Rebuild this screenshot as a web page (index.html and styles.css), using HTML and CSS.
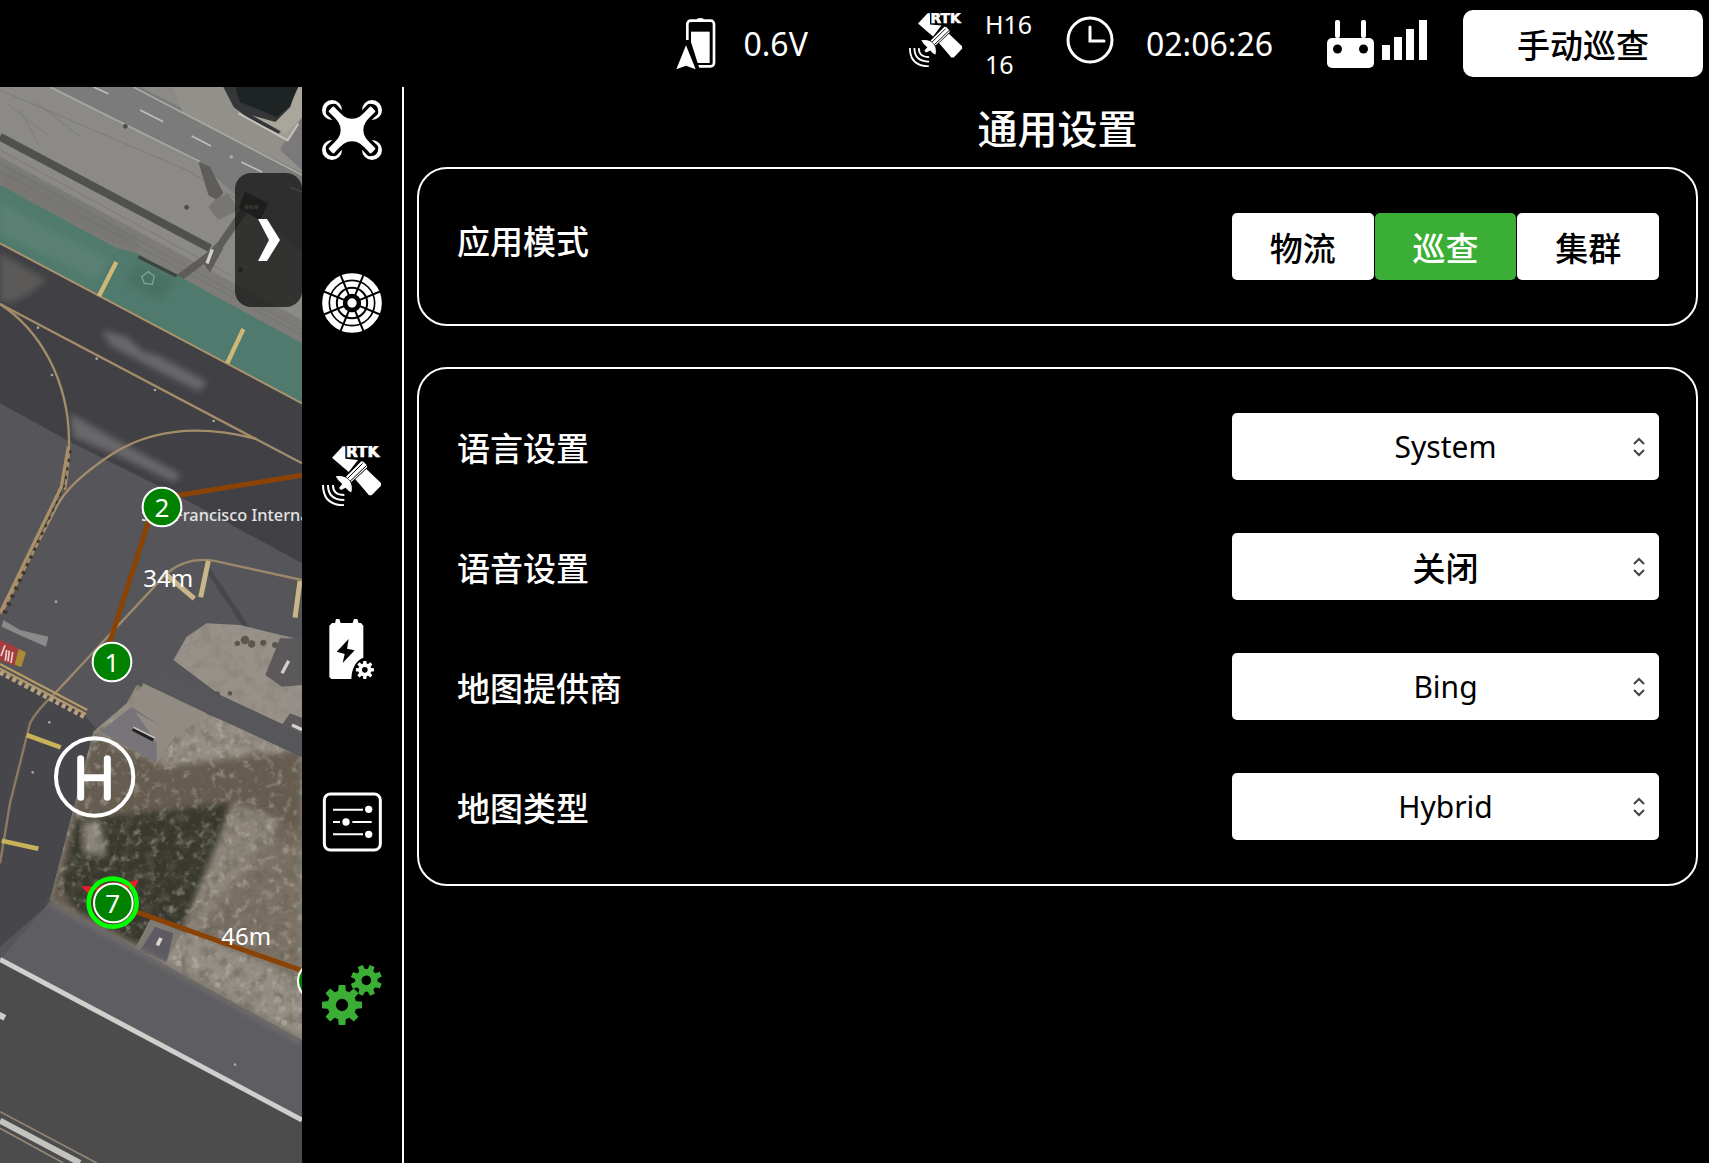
FILE: index.html
```html
<!DOCTYPE html>
<html lang="zh-CN">
<head>
<meta charset="utf-8">
<meta name="viewport" content="width=device-width, initial-scale=1">
<title>通用设置</title>
<link rel="stylesheet" href="styles.css">
</head>
<body>
<svg class="defs" aria-hidden="true">
  <defs>
    <symbol id="icon-rtk" viewBox="0 0 180 180">
      <path fill="#fff" d="M30 35 62 1h8v37l38 4-28 36z"/>
      <text x="72" y="34" class="rtk-text">RTK</text>
      <path fill="#fff" d="M100 100 133 69l44 42v8l-28 29h-8zM72 92l46-46 6 1 11 11v6L88 108z"/>
      <path d="M76 98l46-46M84 106l50-48" stroke="#000" stroke-width="3"/>
      <path fill="#fff" d="M41 91q28-4 42 14 10 14 5 34-9-3-17-14l-14 7-6-6 10-12q-14-10-20-23z"/>
      <path d="M33 117q-1 30 34 30M18 117q0 45 49 45M3 117q0 60 63 61" fill="none" stroke="#fff" stroke-width="6"/>
    </symbol>
    <symbol id="gear" viewBox="-60 -60 120 120">
      <circle r="31" fill="none" stroke="currentColor" stroke-width="25"/>
      <g fill="currentColor">
        <path id="teeth" d="M-12-38-10-60h20l2 22zM-12 38l2 22h20l2-22zM-38-12-60-10v20l22 2zM38-12l22 2v20l-22 2z"/>
        <use href="#teeth" transform="rotate(45)"/>
      </g>
    </symbol>
  </defs>
</svg>

<header class="topbar">
  <div class="status status-battery">
    <svg class="icon-battery" viewBox="0 0 120 156" aria-label="电池">
      <path fill="#fff" d="M62 6q0-6 11-6t11 6z"/>
      <rect x="34" y="8" width="80" height="137" rx="10" fill="none" stroke="#fff" stroke-width="8"/>
      <path fill="#fff" d="M45 41h56v94H45z"/>
      <path fill="#000" d="M27 66h16l28 88H0z"/>
      <path fill="#fff" d="M30 82l29 72-29-11-29 11z"/>
    </svg>
    <span class="value">0.6V</span>
  </div>
  <div class="status status-rtk">
    <svg class="icon-small" aria-label="RTK"><use href="#icon-rtk"/></svg>
    <div class="sats"><span>H16</span><span>16</span></div>
  </div>
  <div class="status status-time">
    <svg class="icon-clock" viewBox="0 0 48 48" aria-label="时间">
      <circle cx="24" cy="24" r="22" fill="none" stroke="#fff" stroke-width="3"/>
      <path d="M24 11v14h14" fill="none" stroke="#fff" stroke-width="3" stroke-linecap="round"/>
    </svg>
    <span class="value">02:06:26</span>
  </div>
  <svg class="icon-remote" viewBox="0 0 100 48" aria-label="遥控信号">
    <g fill="#fff">
      <rect x="8" y="0" width="5" height="18" rx="2"/><rect x="34" y="0" width="5" height="18" rx="2"/>
      <rect y="18" width="47" height="30" rx="5"/>
      <path d="M55 25h8v15h-8zM67 17h8v23h-8zM79 9h8v31h-8zM92 0h8v40h-8z"/>
    </g>
    <circle cx="10.500" cy="29" r="4.500"/><circle cx="36.500" cy="29" r="4.500"/>
  </svg>
  <button class="mode-button" type="button">手动巡查</button>
</header>

<div class="workspace">
  <section class="map" aria-label="地图">
    <svg class="map-canvas" viewBox="0 21 906 3228" preserveAspectRatio="xMinYMin slice">
      <defs>
        <filter id="grain" x="0" y="0" width="100%" height="100%">
          <feTurbulence type="fractalNoise" baseFrequency="0.030" numOctaves="5" seed="4"/>
          <feColorMatrix values="0 0 0 0 .13  0 0 0 0 .12  0 0 0 0 .09  3 0 0 0 -1.35"/>
        </filter>
        <filter id="grain-light" x="0" y="0" width="100%" height="100%">
          <feTurbulence type="fractalNoise" baseFrequency="0.040" numOctaves="5" seed="11"/>
          <feColorMatrix values="0 0 0 0 .68  0 0 0 0 .64  0 0 0 0 .56  0 3 0 0 -1.6"/>
        </filter>
        <filter id="soft"><feGaussianBlur stdDeviation="9"/></filter>
        <clipPath id="field"><path d="M280 1955 380 1870 410 1815 906 2020V2880L560 2690 400 2600 150 2460z"/></clipPath>
        <clipPath id="island"><path d="M520 1740 560 1670 620 1630 720 1635 906 1680V1990L760 1920z"/></clipPath>
      </defs>
      <path fill="#56555a" d="M0 0h906v3260H0z"/>
      <!-- apron -->
      <path fill="#8b8a87" d="M0 0h906v800L0 320z"/>
      <path fill="#7c7b7b" d="M120 0h260l526 270v250L600 250z"/>
      <path fill="#92908a" d="M510 0h400v280L550 100z"/>
      <path fill="#74736f" opacity=".6" d="M0 230 906 720v80L0 330z"/>
      <path fill="#777671" filter="url(#soft)" d="M0 240 420 480l-20 40L0 320z" opacity=".8"/>
      <g stroke="#6c6b68" stroke-width="3" opacity=".5" fill="none">
        <path d="M0 30 560 270l346 200M0 250l906 500M0 275l906 490M0 210l700 380M20 70l130 100M100 60l140 110M60 90l60 110"/>
      </g>
      <path d="M150 21 600 245M400 21 906 285" stroke="#aaa8a2" stroke-width="5"/>
      <path d="M420 90l70 35M575 168l58 30M724 246l62 30M870 322l36 14M280 21l45 20" stroke="#c0beb8" stroke-width="5"/>
      <path fill="#7b797c" d="M840 210 906 90v180z"/>
      <path fill="#a09d92" d="M690 21h216v90l-45 72-145-82z"/>
      <path fill="#343638" d="M670 21h236l-30 90-40 50-90-45-45-35z"/>
      <path fill="#aaa69b" d="M906 21v90l-50 50-100-55 70 20 45-45 20-60z"/>
      <path fill="#1d2423" d="M705 21h190l-28 60-37 30-110-45z"/>
      <path d="M716 100l147 81 32-50" stroke="#c4c2bb" stroke-width="6" fill="none"/>
      <path d="M0 170 630 505" stroke="#50504d" stroke-width="24"/>
      <path d="M535 595 650 510l90-130" stroke="#5d5c58" stroke-width="22" fill="none"/>
      <path fill="#5e5d59" d="M595 245l35 15 40 80-20 20-25-15zM600 540l50-50 20 15-40 72z"/>
      <path fill="#777674" d="M650 355 685 340l30 50-60 30-30-40z"/>
      <path fill="#3f3e3b" d="M735 335 805 370 780 420 715 385z"/>
      <path d="M637 508 621 550" stroke="#d2d1ca" stroke-width="10"/>
      <g fill="#4d4c4a"><circle cx="376" cy="139" r="7"/><circle cx="560" cy="382" r="7"/><circle cx="722" cy="569" r="7"/></g>
      <g fill="#8d8c89"><circle cx="740" cy="381" r="7"/><circle cx="754" cy="381" r="7"/><circle cx="769" cy="381" r="7"/></g>
      <!-- green verge -->
      <path fill="#507a6d" d="M0 315 350 505l60 15 496 270v180L0 490z"/>
      <path fill="#638478" opacity=".6" filter="url(#soft)" d="M0 370 330 540l-40 60L0 460z"/>
      <path fill="#44675c" opacity=".5" filter="url(#soft)" d="M410 550 530 600 480 660 380 610z"/>
      <path d="M415 530l115 58" stroke="#3b4644" stroke-width="10"/>
      <path d="M425 590l20-15 18 14-6 24-24-3z" fill="none" stroke="#81a398" stroke-width="4"/>
      <!-- taxiway -->
      <path fill="#414045" d="M0 490 906 970v480L540 1250 200 1080 0 970z"/>
      <path fill="#65635f" filter="url(#soft)" d="M0 520 140 600 90 640 30 670 0 660z" opacity=".75"/>
      <path fill="#69686a" filter="url(#soft)" d="M305 750 380 770 430 815 470 825 620 905 600 935 440 855 330 795z"/>
      <path fill="#69686a" filter="url(#soft)" d="M210 1000 350 1080 545 1185 520 1205 360 1130 220 1070z"/>
      <path d="M0 490 906 970" stroke="#aa926b" stroke-width="6"/>
      <path d="M297 648 349 546M682 849 730 747" stroke="#cfb877" stroke-width="13"/>
      <g fill="none" stroke="#a38d6a" stroke-width="7">
        <path d="M0 672 906 1150"/>
        <path d="M0 672C120 750 205 900 207 1080Q208 1150 195 1230"/>
        <path d="M770 1077C550 1020 420 1070 340 1120 240 1185 190 1240 170 1280L10 1590"/>
      </g>
      <path d="M208 1110 190 1210 8 1610" fill="none" stroke="#40372c" stroke-width="16" stroke-dasharray="10 16"/>
      <path d="M205 1100 184 1220 0 1600" fill="none" stroke="#a8906a" stroke-width="10"/>
      <path d="M906 1500 640 1442Q560 1430 500 1480L165 1840Q110 1890 90 1930L30 2170 0 2350" fill="none" stroke="#9c886b" stroke-width="7"/>
      <path d="M625 1470 745 1650" stroke="#48474b" stroke-width="15"/>
      <path d="M625 1443 602 1552M500 1485 583 1556M900 1503 885 1613" stroke="#c8b58a" stroke-width="15"/>
      <path fill="#8b8a8a" d="M10 1620 60 1650 145 1670 138 1700 70 1670 5 1640z"/>
      <!-- runway hold sign -->
      <path fill="#a53c3d" d="M0 1680 56 1705 45 1757 0 1742z"/><path fill="#ac8c32" d="M56 1707l22 10-14 44-20-7z"/>
      <path d="M3 1728l12-32M20 1710l-4 32M28 1712l-4 32M38 1716l-5 33" stroke="#ecd4d2" stroke-width="5"/>
      <path fill="#424145" opacity=".7" d="M0 1780 250 1900 300 1960 240 2250 150 2470 0 2600z"/>
      <path d="M165 1840Q110 1890 90 1930L30 2170 0 2350" fill="none" stroke="#8a7a64" stroke-width="7"/>
      <path d="M0 1752 262 1890M0 1766 258 1902" stroke="#b79b66" stroke-width="6"/>
      <path d="M0 1777 252 1910" stroke="#b7a382" stroke-width="14" stroke-dasharray="12 9"/>
      <!-- dirt field and island -->
      <path fill="#98918a" d="M520 1740 560 1670 620 1630 720 1635 906 1680V1990L760 1920z"/>
      <path fill="#958e84" d="M280 1955 380 1870 410 1815 906 2020V2880L560 2690 400 2600 150 2460z"/>
      <g clip-path="url(#field)">
        <path fill="#665c50" filter="url(#soft)" d="M500 2060 906 2010V2300L700 2220 560 2560 420 2600 140 2500 280 1960z"/>
        <path fill="#38382f" filter="url(#soft)" d="M230 2220 690 2170 650 2340 560 2530 420 2600 240 2500 180 2430z"/>
        <path fill="#8d857a" filter="url(#soft)" d="M700 2170 850 2220 690 2450 590 2560 550 2540z"/>
        <path fill="#756a5d" opacity=".8" filter="url(#soft)" d="M850 2230 906 2250V2700L580 2560z"/>
        <path fill="#8b857c" filter="url(#soft)" d="M245 2230 300 2220 320 2330 250 2320z"/>
        <path d="M150 1800h760v1100H150z" filter="url(#grain)" opacity=".5"/>
        <path d="M150 1800h760v1100H150z" filter="url(#grain-light)" opacity=".4"/>
      </g>
      <g clip-path="url(#island)"><path d="M500 1600h406v400H500z" filter="url(#grain)" opacity=".2"/></g>
      <g fill="#45443a" opacity=".75"><circle cx="735" cy="1680" r="13"/><circle cx="755" cy="1692" r="11"/><circle cx="790" cy="1688" r="9"/><circle cx="825" cy="1695" r="9"/><circle cx="712" cy="1690" r="8"/><circle cx="652" cy="1842" r="8"/><circle cx="690" cy="1840" r="7"/></g>
      <path fill="#57565a" d="M480 1760 906 1960V2032L430 1810z"/>
      <path fill="#5b595a" d="M840 1675h66v140l-60 5-50-35zM870 1900l36 14v45l-60-25z"/>
      <path d="M846 1780l20-38M876 1935l30 14" stroke="#d3d0ca" stroke-width="10"/>
      <path fill="#918b84" d="M430 1810 620 1900 530 1970 395 1880z"/>
      <path fill="#77757a" d="M300 1955 395 1880 530 1970 470 2050z"/>
      <path fill="#918b84" d="M405 1895 530 1965 470 2050 470 1990z"/>
      <path d="M398 1948 460 1980" stroke="#222123" stroke-width="10"/>
      <path d="M400 1942 465 1974" stroke="#c6c2bb" stroke-width="5"/>
      <path d="M80 1965 182 2002M5 2282 115 2306" stroke="#c9b25a" stroke-width="14"/>
      <path fill="#807a74" d="M455 2510 545 2555 495 2650 405 2605z"/><path fill="#5d5b61" d="M465 2540 520 2560 500 2645 420 2612z"/>
      <path d="M472 2596 483 2574" stroke="#d9d8d5" stroke-width="11"/>
      <g fill="#aaa49c"><circle cx="535" cy="2650" r="9"/><circle cx="653" cy="2715" r="8"/><circle cx="852" cy="2828" r="9"/></g>
      <!-- runway -->
      <path fill="#5d5d62" d="M150 2465 400 2605 560 2690 906 2885V3120L0 2640z"/>
      <path d="M150 2465 400 2603 560 2690 906 2885" fill="none" stroke="#77736d" stroke-width="16" filter="url(#soft)"/>
      <path fill="#4c4c4d" d="M0 2640 906 3120V3260H0z"/>
      <path d="M0 2638 906 3120" stroke="#d0cfcb" stroke-width="15"/>
      <path d="M0 2816 8 2800" stroke="#d0cfcb" stroke-width="24"/>
      <path d="M0 3122 240 3249" stroke="#c2c2bf" stroke-width="18"/>
      <path d="M0 3095 290 3249M0 3145 190 3249" stroke="#968774" stroke-width="5"/>
      <g fill="#a7a5a2"><circle cx="114" cy="743" r="4"/><circle cx="290" cy="836" r="4"/><circle cx="465" cy="930" r="4"/><circle cx="641" cy="1023" r="4"/><circle cx="156" cy="885" r="4"/><circle cx="168" cy="1565" r="4"/><circle cx="148" cy="1927" r="4"/><circle cx="98" cy="2077" r="4"/><circle cx="705" cy="2954" r="4"/><circle cx="694" cy="230" r="6"/></g>
      <!-- place name, route and waypoints -->
      <text x="424" y="1323" class="place">San Francisco International</text>
      <path d="M906 1186 486 1254M450 1310 325 1700M338 2470 906 2672" fill="none" stroke="#8b4205" stroke-width="15"/>
      <text x="430" y="1520" class="distance">34m</text>
      <text x="664" y="2594" class="distance">46m</text>
      <path fill="#e8202c" d="M244 2418 300 2420 416 2400 350 2536z"/>
      <circle cx="338" cy="2468" r="72" fill="#4c3a25" stroke="#0f0" stroke-width="14"/>
      <path fill="#f03626" d="M285 2430q50-40 105-8l-50 30z"/>
      <g fill="#008200" stroke="#fff" stroke-width="6">
        <circle cx="486" cy="1281" r="58"/><circle cx="336" cy="1746" r="58"/><circle cx="340" cy="2469" r="58"/><circle cx="952" cy="2703" r="58"/>
      </g>
      <g class="waypoint"><text x="486" y="1310">2</text><text x="336" y="1775">1</text><text x="338" y="2498">7</text></g>
      <circle cx="284" cy="2091" r="116" fill="none" stroke="#fff" stroke-width="12"/>
      <path d="M242 2036v116M322 2036v116M242 2093h80" stroke="#fff" stroke-width="21" stroke-linecap="round"/>
    </svg>
    <button class="drawer-toggle" type="button" aria-label="展开">
      <svg viewBox="0 0 24 42"><path fill="#fff" d="M1 0h9l13 21-13 21H1l11-21z"/></svg>
    </button>
  </section>

  <nav class="sidebar" aria-label="设置分类">
    <button type="button" aria-label="飞行器"><svg viewBox="0 0 180 180">
      <g fill="none" stroke="#fff" stroke-width="12"><circle cx="30" cy="30" r="24"/><circle cx="150" cy="30" r="24"/><circle cx="30" cy="150" r="24"/><circle cx="150" cy="150" r="24"/></g>
      <path fill="#fff" stroke="#000" stroke-width="26" stroke-linejoin="round" d="M36 24C60 52 70 58 90 58S120 52 144 24L156 36C128 60 122 70 122 90S128 120 156 144L144 156C120 128 110 122 90 122S60 128 36 156L24 144C52 120 58 110 58 90S52 60 24 36z"/>
      <path fill="#fff" stroke="#fff" stroke-width="8" stroke-linejoin="round" d="M34 24C60 52 70 60 90 60S120 52 146 24L156 34C128 60 120 70 120 90S128 120 156 146L146 156C120 128 110 120 90 120S60 128 34 156L24 146C52 120 60 110 60 90S52 60 24 34z"/>
    </svg></button>
    <button type="button" aria-label="雷达"><svg viewBox="-90 -90 180 180">
      <circle r="14" fill="#fff"/>
      <g fill="none" stroke="#fff"><circle r="35" stroke-width="15"/><circle r="57" stroke-width="17"/><circle r="80" stroke-width="19"/></g>
      <g stroke="#000" stroke-width="6"><path d="M-8-20-36-88M8-20 36-88M-20-8-88-36M-20 8-88 36M-8 20-36 88M8 20 36 88M20-8 88-36M20 8 88 36"/></g>
    </svg></button>
    <button type="button" aria-label="RTK"><svg><use href="#icon-rtk"/></svg></button>
    <button type="button" aria-label="电池设置"><svg viewBox="0 0 180 180">
      <path fill="#fff" d="M30 12h9l3-12h10l4 12h36l4-12h10l4 12h7l7 8v96q-34 14-36 64H28l-6-6V20z"/>
      <path d="M80 60 44 98l24 7-6 27 36-38-23-5z"/>
      <use href="#gear" x="101" y="125" width="55" height="55"/>
    </svg></button>
    <button type="button" aria-label="参数"><svg viewBox="0 0 180 180">
      <rect x="7" y="6" width="168" height="168" rx="18" fill="none" stroke="#fff" stroke-width="9"/>
      <path d="M33 53h90M33 90h21M91 90h58M33 127h90" stroke="#fff" stroke-width="6"/>
      <g fill="#fff"><circle cx="140" cy="52" r="11"/><circle cx="72" cy="90" r="11"/><circle cx="140" cy="127" r="11"/></g>
    </svg></button>
    <button type="button" class="active" aria-label="通用设置"><svg viewBox="0 0 180 180">
      <use href="#gear" x="0" y="60" width="120" height="120"/>
      <use href="#gear" x="86" y="-1" width="94" height="94" transform="rotate(22 133 46)"/>
    </svg></button>
  </nav>

  <main class="settings">
    <h1>通用设置</h1>
    <section class="panel">
      <div class="row row-mode">
        <span class="label">应用模式</span>
        <div class="segmented control" role="group" aria-label="应用模式">
          <button type="button">物流</button>
          <button type="button" class="selected" aria-pressed="true">巡查</button>
          <button type="button">集群</button>
        </div>
      </div>
    </section>
    <section class="panel">
      <div class="row">
        <label class="label" for="language">语言设置</label>
        <div class="control picker"><select id="language"><option>System</option></select><svg viewBox="0 0 14 20"><path d="M2 7l5-5 5 5M2 13l5 5 5-5"/></svg></div>
      </div>
      <div class="row">
        <label class="label" for="voice">语音设置</label>
        <div class="control picker"><select id="voice" class="han"><option>关闭</option></select><svg viewBox="0 0 14 20"><path d="M2 7l5-5 5 5M2 13l5 5 5-5"/></svg></div>
      </div>
      <div class="row">
        <label class="label" for="provider">地图提供商</label>
        <div class="control picker"><select id="provider"><option>Bing</option></select><svg viewBox="0 0 14 20"><path d="M2 7l5-5 5 5M2 13l5 5 5-5"/></svg></div>
      </div>
      <div class="row">
        <label class="label" for="maptype">地图类型</label>
        <div class="control picker"><select id="maptype"><option>Hybrid</option></select><svg viewBox="0 0 14 20"><path d="M2 7l5-5 5 5M2 13l5 5 5-5"/></svg></div>
      </div>
    </section>
  </main>
</div>
</body>
</html>
```
FILE: styles.css
```css
* {
  box-sizing: border-box;
}

body {
  margin: 0;
  min-height: 100vh;
  display: flex;
  flex-direction: column;
  background: #000;
  color: #fff;
  font-family: "Noto Sans", "Noto Sans CJK SC", sans-serif;
  font-size: 33px;
}

button,
select {
  font: inherit;
  border: 0;
  padding: 0;
  cursor: pointer;
}

svg {
  display: block;
}

.defs {
  position: absolute;
  width: 0;
  height: 0;
}

.rtk-text {
  font: bold 46px "DejaVu Sans", sans-serif;
  fill: #fff;
  stroke: #fff;
  stroke-width: 2px;
}

h1,
.label,
.mode-button,
.segmented button,
.picker .han {
  font-family: "Noto Sans CJK SC", sans-serif;
  font-weight: 500;
}

/* Top bar */
.topbar {
  height: 87px;
  display: flex;
  align-items: center;
  justify-content: flex-end;
  padding-right: 6px;
}

.status {
  display: flex;
  align-items: center;
}

.value {
  font-size: 32px;
  line-height: 40px;
}

.status-battery {
  gap: 27px;
  margin-right: 101px;
}

.icon-battery {
  width: 40px;
  height: 52px;
}

.status-rtk {
  gap: 22px;
  margin-right: 34px;
}

.icon-small {
  width: 54px;
  height: 54px;
  margin-bottom: 8px;
}

.sats {
  display: flex;
  flex-direction: column;
  font-size: 25px;
  line-height: 40px;
}

.status-time {
  gap: 32px;
  margin-right: 54px;
}

.icon-clock {
  width: 48px;
  height: 48px;
  margin-bottom: 8px;
}

.icon-remote {
  width: 100px;
  height: 48px;
  margin-right: 36px;
}

.mode-button {
  width: 240px;
  height: 67px;
  border-radius: 10px;
  background: #fff;
  color: #000;
}

/* Workspace */
.workspace {
  flex: 1;
  display: grid;
  grid-template-columns: 302px 102px 1fr;
}

.map {
  position: relative;
  overflow: hidden;
  background: #56555a;
}

.map-canvas {
  width: 100%;
  height: 100%;
}

.place {
  font-size: 49px;
  font-weight: 500;
  fill: #e4e4e4;
}

.distance {
  font-size: 72px;
  fill: #fff;
}

.waypoint {
  font-size: 78px;
  fill: #fff;
  text-anchor: middle;
}

.drawer-toggle {
  position: absolute;
  top: 86px;
  right: 0;
  width: 67px;
  height: 134px;
  border-radius: 16px;
  background: rgba(20, 20, 20, .75);
  display: grid;
  place-items: center;
}

.drawer-toggle svg {
  width: 24px;
  height: 42px;
}

.sidebar {
  display: flex;
  flex-direction: column;
  align-items: center;
  gap: 113px;
  padding-top: 13px;
  border-right: 2px solid #fff;
}

.sidebar button {
  background: none;
  color: #fff;
}

.sidebar .active {
  color: #3bae36;
}

.sidebar button > svg {
  width: 60px;
  height: 60px;
}

/* Settings */
.settings {
  padding: 0 11px 0 13px;
}

h1 {
  margin: 0;
  font-size: 40px;
  line-height: 80px;
  text-align: center;
}

.panel {
  display: flex;
  flex-direction: column;
  gap: 53px;
  padding: 44px 37px 44px 38px;
  border: 2px solid #fff;
  border-radius: 30px;
}

.panel + .panel {
  margin-top: 41px;
}

.row {
  display: flex;
  align-items: center;
  justify-content: space-between;
}

.row-mode {
  align-items: flex-start;
}

.label {
  line-height: 54px;
}

.control {
  width: 427px;
  height: 67px;
}

.segmented {
  display: grid;
  grid-template-columns: repeat(3, 1fr);
  gap: 1px;
}

.segmented button {
  border-radius: 5px;
  background: #fff;
  color: #000;
}

.segmented .selected {
  background: #3bae36;
  color: #fff;
}

.picker {
  position: relative;
}

.picker select {
  appearance: none;
  width: 100%;
  height: 100%;
  border-radius: 5px;
  background: #fff;
  color: #000;
  font-size: 30px;
  text-align: center;
  text-align-last: center;
}

.picker .han {
  font-size: 33px;
}

.picker svg {
  position: absolute;
  right: 13px;
  top: 24px;
  width: 14px;
  height: 20px;
  fill: none;
  stroke: #444;
  stroke-width: 2px;
  pointer-events: none;
}
```
